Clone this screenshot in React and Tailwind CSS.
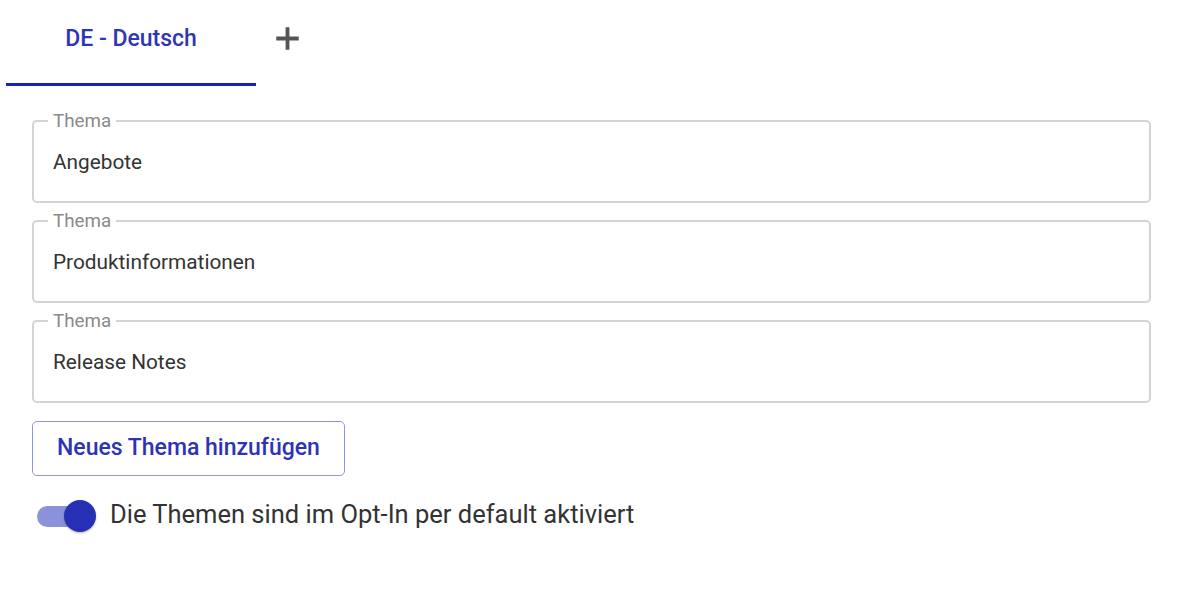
import { useState } from "react";

const topics = ["Angebote", "Produktinformationen", "Release Notes"];

function TopicField({ value }) {
  return (
    <div className="relative h-[91px]">
      <fieldset className="absolute inset-0 rounded-[5px] border-2 border-[#d4d4d4] px-[14px]">
        <legend className="px-[5px] text-[18.8px] leading-[18px] text-[#8a8a8a]">Thema</legend>
      </fieldset>
      <div className="relative flex h-full items-center pl-[21px] pt-[11px] text-[20.8px] text-[#333]">
        {value}
      </div>
    </div>
  );
}

export default function App() {
  const [enabled, setEnabled] = useState(true);

  return (
    <div
      className="min-h-screen bg-white"
      style={{ fontFamily: "Roboto, 'Liberation Sans', sans-serif" }}
    >
      <div className="flex items-center pl-[6px]">
        <button className="flex h-[86px] w-[250px] items-center justify-center border-b-[3px] border-[#1a1fc4] pb-[4px] text-[23px] font-medium text-[#3035b8]">
          DE - Deutsch
        </button>
        <button className="ml-[18px] flex h-[86px] items-center pb-[9px] text-[#555]">
          <svg width="27" height="27" viewBox="0 0 24 24">
            <path d="M12 2v20M2 12h20" stroke="currentColor" strokeWidth="3.4" />
          </svg>
        </button>
      </div>

      <div className="flex flex-col gap-[9px] pl-[32px] pr-[47px] pt-[26px]">
        {topics.map((t) => (
          <TopicField key={t} value={t} />
        ))}
      </div>

      <div className="pl-[32px] pt-[18px]">
        <button className="h-[55px] rounded-[5px] border border-[#8f95e3] px-[24px] text-[23px] font-medium text-[#2d33b3]">
          Neues Thema hinzufügen
        </button>
      </div>

      <label className="mt-[22px] flex cursor-pointer items-center pl-[37px]">
        <span
          className="relative h-[32px] w-[58px]"
          onClick={() => setEnabled(!enabled)}
        >
          <span className="absolute left-0 top-[6px] h-[21px] w-[55px] rounded-full bg-[#8c92da]" />
          <span className="absolute left-[27px] top-0 h-[32px] w-[32px] rounded-full bg-[#2630b4] shadow-[0_1px_2px_rgba(0,0,0,0.3)]" />
        </span>
        <span className="ml-[15px] -mt-[3px] text-[25.5px] text-[#333]">
          Die Themen sind im Opt-In per default aktiviert
        </span>
      </label>
    </div>
  );
}
